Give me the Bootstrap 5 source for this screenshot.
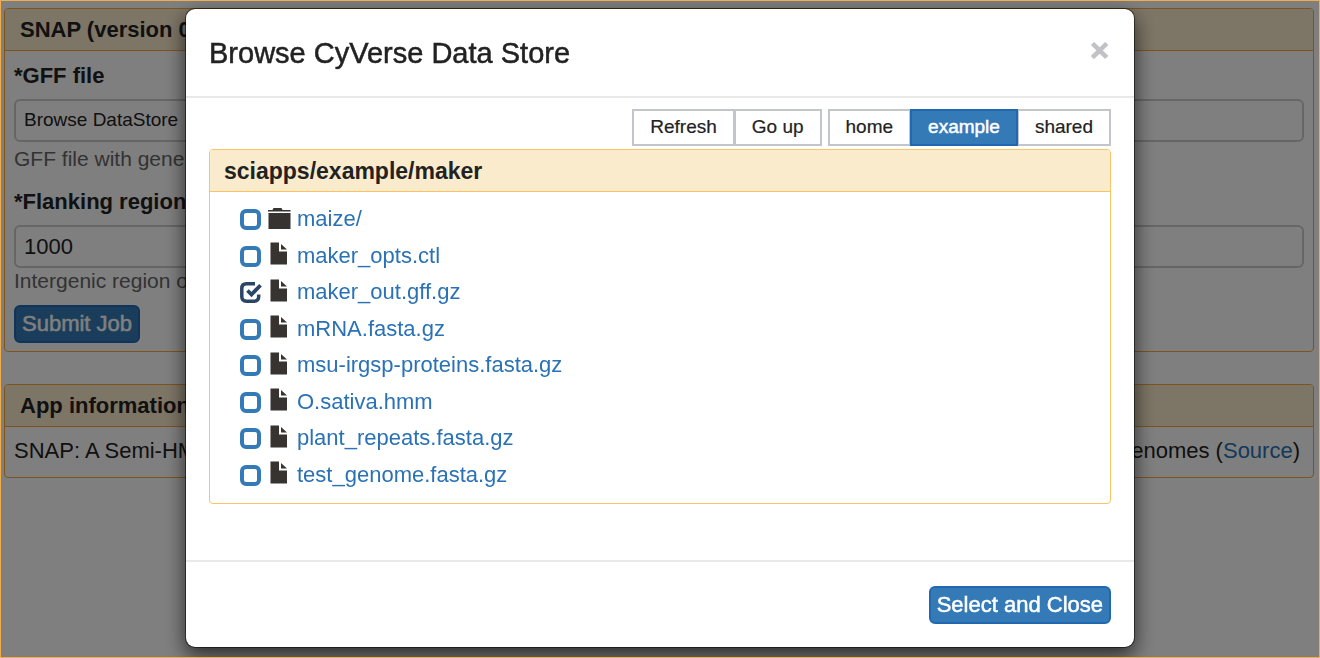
<!DOCTYPE html>
<html lang="en">
<head>
<meta charset="utf-8">
<meta name="viewport" content="width=device-width, initial-scale=1">
<title>SciApps - Browse CyVerse Data Store</title>
<link rel="stylesheet" href="https://cdn.jsdelivr.net/npm/bootstrap@5.3.0/dist/css/bootstrap.min.css">
<style>
  :root { --amber: #fbc565; --cream: #faebcc; --blue: #337ab7; --blue-edge: #2268b0; }
  body { font-family: "Liberation Sans", Arial, sans-serif; font-size: 22px; line-height: 30px; color: #222; background: #fff; }
  a { color: #2a72b5; text-decoration: none; }
  .page-frame { position: fixed; inset: 0; border: 1px solid #f0ad4e; z-index: 1070; pointer-events: none; }
  .page-body { padding: 8px 6px 0 4px; }
  .panel { border: 1px solid var(--amber); border-radius: 4px; }
  .page-body .panel { border-color: #ffa838; }
  .panel-head { background: var(--cream); border-bottom: 1px solid var(--amber); border-radius: 3px 3px 0 0; font-weight: bold; line-height: 40px; padding: 1px 15px 0; }
  .page-body .panel-head { border-color: #ffa838; }
  .modal .panel-head { font-size: 23px; padding-left: 14px; }
  .app-panel { margin-bottom: 32px; }
  .app-body { padding: 8px 9px; }
  .info-body { padding: 9px 13px 11px 9px; }
  .field-name { display: block; font-weight: bold; line-height: 34px; margin-bottom: 6px; }
  .field-box, .browse-btn { height: 43px; border: 2px solid #ccc; border-radius: 6px; font-size: 22px; color: #222; padding: 4px 8px; background: #fff; }
  .browse-btn { font-size: 19px; line-height: 30px; padding-top: 2px; }
  .hint { color: #666; line-height: 26px; font-size: 21px; }
  .field-hint { padding-top: 4px; margin-bottom: 13px; }
  .last-hint { margin-bottom: 11px; }
  .btn-blue { background: var(--blue); border: 2px solid var(--blue-edge); color: #fff; border-radius: 6px; font-size: 22px; line-height: 30px; padding: 2px 6px; -webkit-text-stroke: .5px #fff; }
  .btn-blue:hover { background: var(--blue-edge); color: #fff; }
  .modal { --bs-modal-width: 950px; --bs-modal-margin: 8px; }
  .modal-dialog { max-width: 950px; }
  .modal-content { border: 1px solid rgba(0,0,0,.5); border-radius: 10px; box-shadow: 0 8px 20px rgba(0,0,0,.65); color: #222; }
  .modal-header { padding: 23px 23px 22px; border-bottom: 2px solid #e9e9e9; height: 89px; }
  .modal-title { font-size: 29px; line-height: 40px; font-weight: normal; -webkit-text-stroke: .5px #222; }
  .close-x { border: 0; background: none; padding: 0 2px 6px; color: #c0c2c6; font-weight: bold; font-size: 32px; line-height: 32px; -webkit-text-stroke: 1px #c0c2c6; }
  .modal-body { padding: 11px 23px 56px; }
  .modal-footer { border-top: 2px solid #e9e9e9; padding: 24px 23px 23px; }
  .modal-footer > * { margin: 0; }
  .store-tools { gap: 6px; margin-bottom: 3px; }
  .store-tools .btn { border: 2px solid #c2c6ca; border-radius: 0; color: #222; background: #fff; font-size: 19px; line-height: 30px; padding: 1px 16px 2px; -webkit-text-stroke: .2px #222; }
  .store-tools .btn + .btn { margin-left: -1px; }
  .store-tools .btn.active { background: var(--blue); border-color: var(--blue-edge); color: #fff; -webkit-text-stroke: .5px #fff; }
  .file-list { display: grid; grid-auto-rows: 1fr; min-height: 311px; margin: 0; padding: 9px 29px 10px 30px; list-style: none; }
  .file-pick { appearance: none; flex: none; width: 21px; height: 21px; margin: 1px 7px 0 0; border: 4px solid var(--blue); border-radius: 6px; background: #fff; }
  .file-pick:checked { width: 22px; margin-right: 6px; border: 0; border-radius: 0; background: url("data:image/svg+xml,%3Csvg xmlns='http://www.w3.org/2000/svg' viewBox='0 0 22 21' fill='none' stroke='%23294667'%3E%3Cpath d='M15 1.800H6.500Q1.800 1.800 1.800 6.500V14.500Q1.800 19.200 6.500 19.200H14Q18.700 19.200 18.700 14.500V12.500' stroke-width='3.500'/%3E%3Cpath d='M7.500 8.500L11.500 12.500L20.500 3.200' stroke-width='3.800'/%3E%3C/svg%3E"); }
  .file-icon { width: 23px; height: 23px; margin-right: 6px; flex: none; fill: #373331; }
  .doc-icon { margin-bottom: 4px; }
  .folder-icon { margin-bottom: 2px; }
</style>
</head>
<body>
<main class="page-body">
  <section class="panel app-panel">
    <div class="panel-head">SNAP (version 0.1)</div>
    <form class="app-body">
      <label class="field-name" for="gff">*GFF file</label>
      <div class="input-group">
        <button class="btn browse-btn" type="button">Browse DataStore</button>
        <input class="form-control field-box" id="gff" type="text">
      </div>
      <div class="hint field-hint">GFF file with gene</div>
      <label class="field-name" for="flank">*Flanking region</label>
      <input class="form-control field-box" id="flank" type="text" value="1000">
      <div class="hint last-hint">Intergenic region on</div>
      <button class="btn btn-blue" type="button">Submit Job</button>
    </form>
  </section>
  <section class="panel">
    <div class="panel-head">App information</div>
    <div class="d-flex justify-content-between info-body">
      <span>SNAP: A Semi-HMM</span>
      <span>genomes (<a href="#source">Source</a>)</span>
    </div>
  </section>
</main>

<div class="modal-backdrop show"></div>
<div class="modal show d-block overflow-hidden" tabindex="-1" role="dialog" aria-labelledby="storeTitle">
  <div class="modal-dialog">
    <div class="modal-content">
      <div class="modal-header d-flex justify-content-between">
        <h1 class="modal-title" id="storeTitle">Browse CyVerse Data Store</h1>
        <button class="close-x" type="button" aria-label="Close">×</button>
      </div>
      <div class="modal-body">
        <div class="store-tools d-flex justify-content-end">
          <div class="btn-group">
            <button class="btn" type="button">Refresh</button>
            <button class="btn" type="button">Go up</button>
          </div>
          <div class="btn-group">
            <button class="btn" type="button">home</button>
            <button class="btn active" type="button">example</button>
            <button class="btn" type="button">shared</button>
          </div>
        </div>
        <div class="panel">
          <div class="panel-head">sciapps/example/maker</div>
          <ul class="file-list">
            <li class="d-flex align-items-center"><input class="file-pick" type="checkbox" id="f1"><label class="d-flex align-items-center" for="f1"><svg class="file-icon folder-icon" viewBox="0 0 23 23"><path d="M0 3h4.500l1-2h8l1 2H22.500v1.500H0zM.5 6H22.500V22H.5z"/></svg><a href="#maize">maize/</a></label></li>
            <li class="d-flex align-items-center"><input class="file-pick" type="checkbox" id="f2"><label class="d-flex align-items-center" for="f2"><svg class="file-icon doc-icon" viewBox="0 0 23 23"><use href="#doc"/></svg><a href="#opts">maker_opts.ctl</a></label></li>
            <li class="d-flex align-items-center"><input class="file-pick" type="checkbox" id="f3" checked><label class="d-flex align-items-center" for="f3"><svg class="file-icon doc-icon" viewBox="0 0 23 23"><use href="#doc"/></svg><a href="#out">maker_out.gff.gz</a></label></li>
            <li class="d-flex align-items-center"><input class="file-pick" type="checkbox" id="f4"><label class="d-flex align-items-center" for="f4"><svg class="file-icon doc-icon" viewBox="0 0 23 23"><use href="#doc"/></svg><a href="#mrna">mRNA.fasta.gz</a></label></li>
            <li class="d-flex align-items-center"><input class="file-pick" type="checkbox" id="f5"><label class="d-flex align-items-center" for="f5"><svg class="file-icon doc-icon" viewBox="0 0 23 23"><use href="#doc"/></svg><a href="#proteins">msu-irgsp-proteins.fasta.gz</a></label></li>
            <li class="d-flex align-items-center"><input class="file-pick" type="checkbox" id="f6"><label class="d-flex align-items-center" for="f6"><svg class="file-icon doc-icon" viewBox="0 0 23 23"><use href="#doc"/></svg><a href="#sativa">O.sativa.hmm</a></label></li>
            <li class="d-flex align-items-center"><input class="file-pick" type="checkbox" id="f7"><label class="d-flex align-items-center" for="f7"><svg class="file-icon doc-icon" viewBox="0 0 23 23"><use href="#doc"/></svg><a href="#repeats">plant_repeats.fasta.gz</a></label></li>
            <li class="d-flex align-items-center"><input class="file-pick" type="checkbox" id="f8"><label class="d-flex align-items-center" for="f8"><svg class="file-icon doc-icon" viewBox="0 0 23 23"><use href="#doc"/></svg><a href="#genome">test_genome.fasta.gz</a></label></li>
          </ul>
        </div>
      </div>
      <div class="modal-footer">
        <button class="btn btn-blue" type="button">Select and Close</button>
      </div>
    </div>
  </div>
</div>
<div class="page-frame"></div>
<svg class="d-none" aria-hidden="true"><symbol id="doc" viewBox="0 0 23 23"><path d="M2.500 .5h8.500v9h8v13H2.500zM13 2l6 5.500h-6z"/></symbol></svg>
<script src="https://cdn.jsdelivr.net/npm/bootstrap@5.3.0/dist/js/bootstrap.bundle.min.js"></script>
</body>
</html>
